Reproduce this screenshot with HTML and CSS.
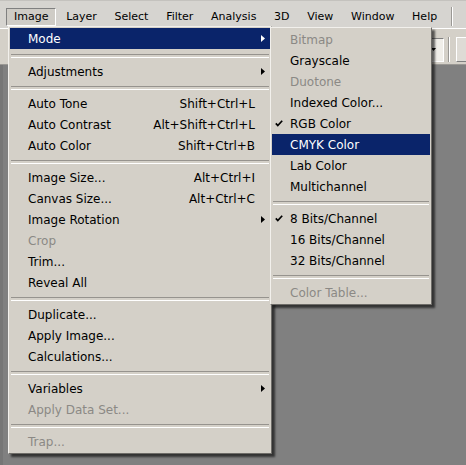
FILE: index.html
```html
<!DOCTYPE html>
<html>
<head>
<meta charset="utf-8">
<link rel="stylesheet" href="styles.css">
</head>
<body>
<div class="app">
  <div class="menubar">
    <span class="mb-item active">Image</span>
    <span class="mb-item">Layer</span>
    <span class="mb-item">Select</span>
    <span class="mb-item">Filter</span>
    <span class="mb-item">Analysis</span>
    <span class="mb-item">3D</span>
    <span class="mb-item">View</span>
    <span class="mb-item">Window</span>
    <span class="mb-item">Help</span>
    <span class="mb-sep"></span>
    <svg class="ws-icon" width="16" height="16" viewBox="0 0 16 16">
      <rect x="1.5" y="1.5" width="16" height="13" fill="#f4f2ee" stroke="#000"/>
      <rect x="1" y="1" width="17" height="3" fill="#000"/>
      <rect x="3" y="2" width="2" height="1" fill="#fff"/>
      <rect x="7" y="2" width="2" height="1" fill="#fff"/>
      <rect x="11" y="2" width="2" height="1" fill="#fff"/>
      <rect x="2" y="5" width="1" height="2" fill="#000"/>
      <rect x="2" y="9" width="1" height="2" fill="#000"/>
    </svg>
  </div>
  <div class="toolbar">
    <div class="tb-drop">
      <svg width="5" height="3" viewBox="0 0 5 3"><polygon points="0,0 5,0 2.5,3" fill="#000"/></svg>
    </div>
    <span class="tb-sep"></span>
    <div class="tb-box"></div>
  </div>
  <div class="workspace"></div>

  <div class="menu main-menu">
    <div class="row hl"><span class="label">Mode</span><svg class="arrow" width="4" height="7" viewBox="0 0 4 7"><polygon points="0,0 4,3.5 0,7"/></svg></div>
    <div class="sep first"></div>
    <div class="row"><span class="label">Adjustments</span><svg class="arrow" width="4" height="7" viewBox="0 0 4 7"><polygon points="0,0 4,3.5 0,7"/></svg></div>
    <div class="sep"></div>
    <div class="row"><span class="label">Auto Tone</span><span class="key">Shift+Ctrl+L</span></div>
    <div class="row"><span class="label">Auto Contrast</span><span class="key">Alt+Shift+Ctrl+L</span></div>
    <div class="row"><span class="label">Auto Color</span><span class="key">Shift+Ctrl+B</span></div>
    <div class="sep"></div>
    <div class="row"><span class="label">Image Size...</span><span class="key">Alt+Ctrl+I</span></div>
    <div class="row"><span class="label">Canvas Size...</span><span class="key">Alt+Ctrl+C</span></div>
    <div class="row"><span class="label">Image Rotation</span><svg class="arrow" width="4" height="7" viewBox="0 0 4 7"><polygon points="0,0 4,3.5 0,7"/></svg></div>
    <div class="row off"><span class="label">Crop</span></div>
    <div class="row"><span class="label">Trim...</span></div>
    <div class="row"><span class="label">Reveal All</span></div>
    <div class="sep"></div>
    <div class="row"><span class="label">Duplicate...</span></div>
    <div class="row"><span class="label">Apply Image...</span></div>
    <div class="row"><span class="label">Calculations...</span></div>
    <div class="sep"></div>
    <div class="row"><span class="label">Variables</span><svg class="arrow" width="4" height="7" viewBox="0 0 4 7"><polygon points="0,0 4,3.5 0,7"/></svg></div>
    <div class="row off"><span class="label">Apply Data Set...</span></div>
    <div class="sep"></div>
    <div class="row off"><span class="label">Trap...</span></div>
  </div>

  <div class="menu sub-menu">
    <div class="row off"><span class="check"></span><span class="label">Bitmap</span></div>
    <div class="row"><span class="check"></span><span class="label">Grayscale</span></div>
    <div class="row off"><span class="check"></span><span class="label">Duotone</span></div>
    <div class="row"><span class="check"></span><span class="label">Indexed Color...</span></div>
    <div class="row"><span class="check"><svg width="8" height="7" viewBox="0 0 8 7"><polyline points="0.8,3.4 2.8,5.6 7.2,0.8" fill="none" stroke="#000" stroke-width="1.7"/></svg></span><span class="label">RGB Color</span></div>
    <div class="row hl"><span class="check"></span><span class="label">CMYK Color</span></div>
    <div class="row"><span class="check"></span><span class="label">Lab Color</span></div>
    <div class="row"><span class="check"></span><span class="label">Multichannel</span></div>
    <div class="sep"></div>
    <div class="row"><span class="check"><svg width="8" height="7" viewBox="0 0 8 7"><polyline points="0.8,3.4 2.8,5.6 7.2,0.8" fill="none" stroke="#000" stroke-width="1.7"/></svg></span><span class="label">8 Bits/Channel</span></div>
    <div class="row"><span class="check"></span><span class="label">16 Bits/Channel</span></div>
    <div class="row"><span class="check"></span><span class="label">32 Bits/Channel</span></div>
    <div class="sep"></div>
    <div class="row off"><span class="check"></span><span class="label">Color Table...</span></div>
  </div>
</div>
</body>
</html>
```

FILE: styles.css
```css
* { box-sizing: border-box; }
html, body { margin: 0; padding: 0; }
body {
  width: 466px;
  height: 465px;
  overflow: hidden;
  background: #808080;
  font-family: "DejaVu Sans", Verdana, sans-serif;
  color: #000;
}
.app {
  position: relative;
  width: 466px;
  height: 465px;
  display: flex;
  flex-direction: column;
}
.menubar {
  height: 28px;
  flex: none;
  background: #d6d4d0;
  border-top: 1px solid #c4c2be;
  display: flex;
  align-items: flex-end;
  padding: 0 0 2px 6px;
  font-size: 11px;
}
.mb-item {
  height: 18px;
  line-height: 16px;
  padding: 0 7px;
  margin-right: 1.7px;
  border: 1px solid transparent;
  white-space: nowrap;
}
.mb-item.active {
  border-color: #808080 #ffffff #ffffff #808080;
  background: #cfccc6;
}
.mb-sep {
  width: 2px;
  height: 19px;
  margin-left: 4px;
  border-left: 1px solid #9a9894;
  border-right: 1px solid #ffffff;
}
.ws-icon {
  margin-left: 14px;
  margin-bottom: 1px;
  flex: none;
}
.toolbar {
  height: 37px;
  flex: none;
  background: #d4d0c8;
  border-top: 1px solid #ffffff;
  border-bottom: 1px solid #9a9894;
  display: flex;
  align-items: center;
  justify-content: flex-end;
  padding-top: 6px;
}
.tb-drop {
  width: 46px;
  height: 24px;
  background: #f0eee9;
  border: 1px solid;
  border-color: #808080 #ffffff #ffffff #808080;
  display: flex;
  align-items: center;
  justify-content: flex-end;
  padding-right: 7px;
}
.tb-sep {
  width: 2px;
  height: 25px;
  margin-left: 4px;
  border-left: 1px solid #9a9894;
  border-right: 1px solid #ffffff;
}
.tb-box {
  width: 10px;
  height: 25px;
  margin-left: 6px;
  background: #dedbd5;
  border: 1px solid;
  border-color: #ffffff #808080 #808080 #ffffff;
  border-right: none;
}
.workspace {
  flex: 1;
  background: #808080;
  border-left: 3px solid #767676;
}

.menu {
  position: absolute;
  background: #d4d0c8;
  border: 1px solid;
  border-color: #f2f0ec #6e6c68 #6e6c68 #f2f0ec;
  padding: 1px;
  font-size: 12px;
  box-shadow: 3px 3px 2px rgba(0, 0, 0, 0.6);
}
.main-menu {
  left: 8px;
  top: 26px;
  width: 264px;
}
.sub-menu {
  left: 270px;
  top: 27px;
  width: 162px;
}
.row {
  height: 21px;
  display: flex;
  align-items: center;
  padding: 0 5px 0 18px;
  white-space: nowrap;
}
.row .label { flex: 1; }
.row .key { margin-right: 10px; }
.row .arrow { fill: #000; flex: none; }
.row.hl { background: #0a246a; color: #ffffff; }
.row.hl .arrow { fill: #ffffff; }
.row.off { color: #8b8985; }
.sub-menu .row { padding-left: 3px; }
.check {
  width: 15px;
  flex: none;
  display: flex;
  align-items: center;
}
.sep {
  height: 11px;
  padding-top: 4px;
  margin: 0 1px;
}
.sep.first {
  height: 12px;
  padding-top: 5px;
}
.sep::before {
  content: "";
  display: block;
  height: 2px;
  border-top: 1px solid #96938e;
  border-bottom: 1px solid #ffffff;
}
```
